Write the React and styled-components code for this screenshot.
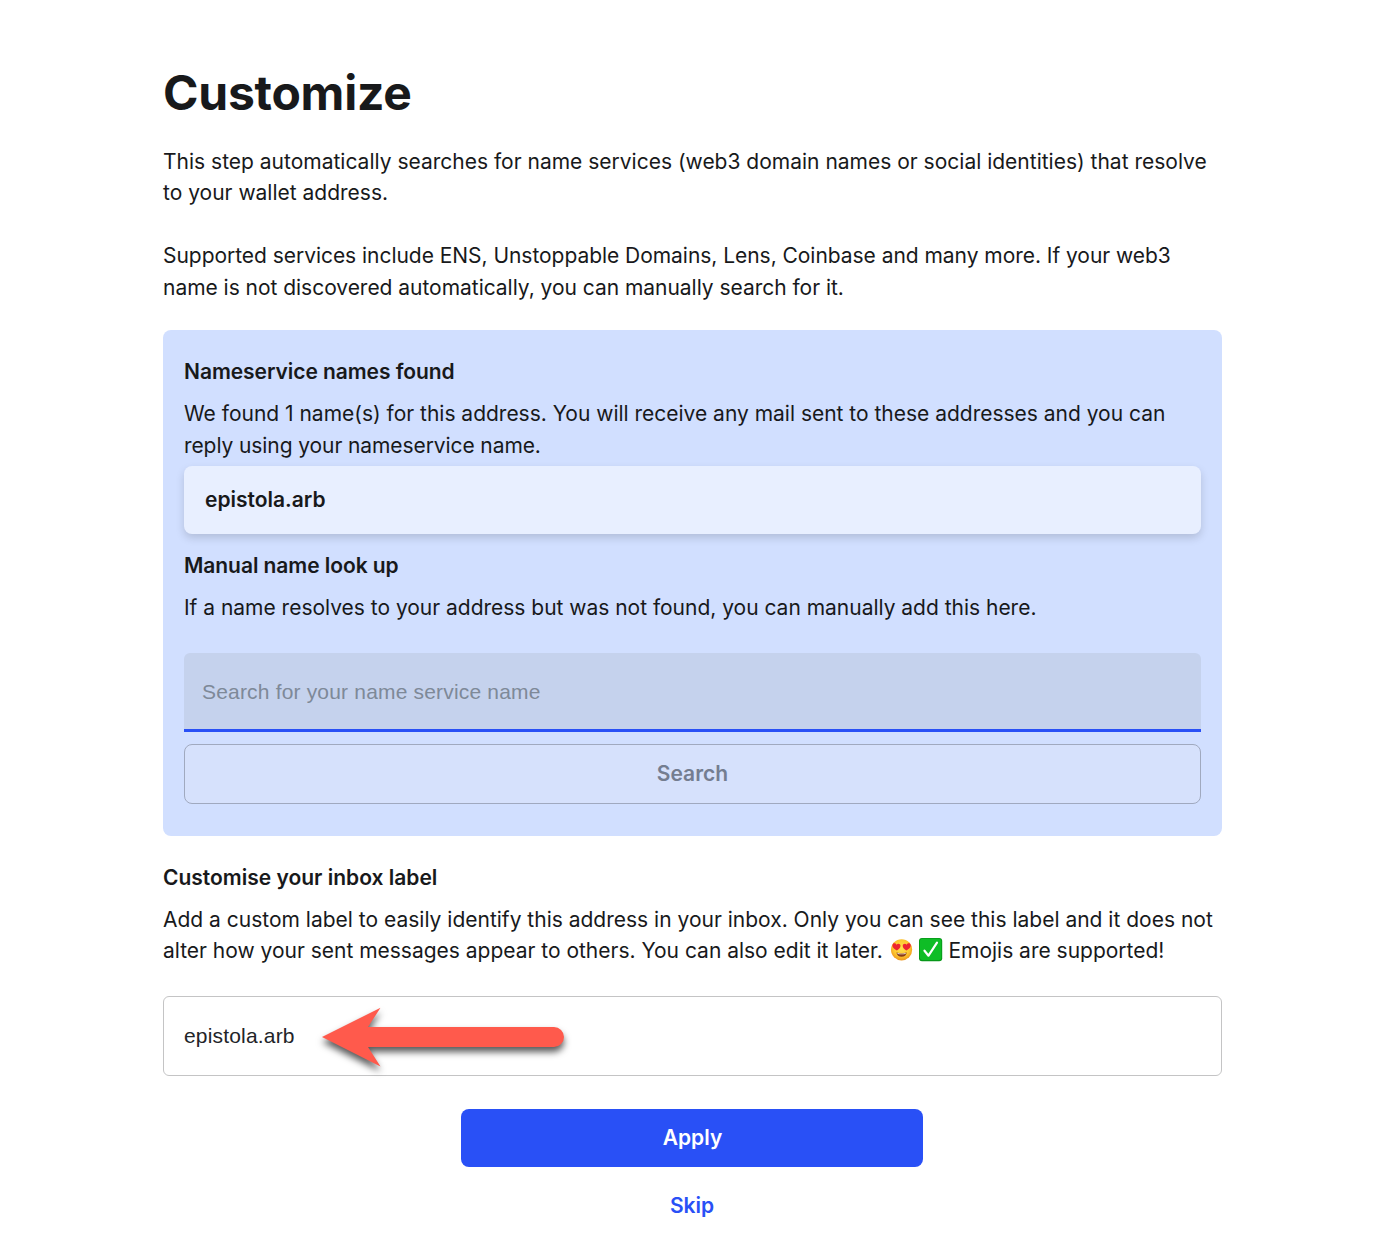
import React from 'react';
import styled, { createGlobalStyle } from 'styled-components';

const GlobalStyle = createGlobalStyle`
  *, *::before, *::after { box-sizing: border-box; }
  body {
    margin: 0;
    background: #fff;
    color: #18191b;
    font-family: Inter, "Liberation Sans", sans-serif;
    font-size: 21px;
    line-height: 31.5px;
  }
  h1, h2, p { margin: 0; }
`;

const Page = styled.main`
  width: 1059px;
  min-height: 1250px;
  margin-left: 163px;
  padding-top: 64px;
  display: flex;
  flex-direction: column;
`;

const Title = styled.h1`
  font-size: 48px;
  line-height: 58px;
  font-weight: 700;
  letter-spacing: -0.25px;
`;

const Copy = styled.p`
  margin-top: ${({ $top }) => $top || 0}px;
  white-space: nowrap;
`;

const Line = styled.span`
  display: block;
  letter-spacing: ${({ $track = 0 }) => $track}px;
`;

const Heading = styled.h2`
  margin-top: ${({ $top }) => $top || 0}px;
  font-size: 21px;
  line-height: 32px;
  font-weight: 600;
  letter-spacing: ${({ $track = 0 }) => $track}px;
`;

const Panel = styled.section`
  height: 506px;
  margin-top: 27px;
  padding: 26px 21px 32px;
  border-radius: 8px;
  background: #d1dfff;
  display: flex;
  flex-direction: column;
`;

const NameCard = styled.div`
  flex: none;
  height: 68px;
  margin-top: 5px;
  padding: 0 21px;
  display: flex;
  align-items: center;
  border-radius: 8px;
  background: #e8efff;
  font-weight: 600;
  box-shadow: 0 4px 8px rgba(0, 0, 0, 0.15);
`;

const SearchInput = styled.input`
  flex: none;
  height: 79px;
  margin-top: 29px;
  padding: 2px 18px 0;
  border: 0;
  border-bottom: 3px solid #2950f6;
  border-radius: 6px 6px 0 0;
  outline: 0;
  background: #c5d2ed;
  font: 21px "Liberation Sans", Arial, sans-serif;
  letter-spacing: 0.18px;
  &::placeholder { color: #7e8998; opacity: 1; }
`;

const SearchButton = styled.button`
  flex: none;
  height: 60px;
  margin-top: 12px;
  border: 1px solid #a0a9bf;
  border-radius: 8px;
  background: #d6e1fc;
  color: #747d90;
  font: 600 21px Inter, sans-serif;
`;

const LabelField = styled.div`
  position: relative;
  flex: none;
  height: 80px;
  margin-top: 29.25px;
  display: flex;
`;

const LabelInput = styled.input`
  flex: 1;
  padding: 0 20px;
  border: 1px solid #c4c4c5;
  border-radius: 6px;
  outline: 0;
  background: #fff;
  color: #222428;
  font: 21px "Liberation Sans", Arial, sans-serif;
  letter-spacing: 0.18px;
`;

const Pointer = styled.svg`
  position: absolute;
  left: 149px;
  top: 2px;
  overflow: visible;
  filter: drop-shadow(0 5px 3.5px rgba(0, 0, 0, 0.65));
`;

const Actions = styled.div`
  display: flex;
  flex-direction: column;
  align-items: center;
  margin-top: 33px;
  padding-right: 1px;
`;

const ApplyButton = styled.button`
  width: 462px;
  height: 58px;
  padding: 0 0 2px 1px;
  border: 0;
  border-radius: 8px;
  background: #2950f6;
  color: #fff;
  font: 600 21px Inter, sans-serif;
`;

const SkipButton = styled.button`
  height: 42px;
  margin-top: 17px;
  padding: 0;
  border: 0;
  background: none;
  color: #2950f6;
  font: 600 21px Inter, sans-serif;
`;

const Emoji = styled.svg`
  width: 24px;
  height: 24px;
  vertical-align: -4px;
`;

const HeartEyes = () => (
  <Emoji viewBox="0 0 24 24" aria-label="heart eyes">
    <defs>
      <radialGradient id="face" cx="50%" cy="42%" r="58%">
        <stop offset="0" stopColor="#ffe34d" />
        <stop offset="0.65" stopColor="#fdc82f" />
        <stop offset="1" stopColor="#ee961c" />
      </radialGradient>
    </defs>
    <circle cx="12.6" cy="11.8" r="10.6" fill="url(#face)" />
    <path d="M7.4 14.6Q12.6 16.2 17.8 14.6Q17 18.8 12.6 18.8T7.4 14.6Z" fill="#8a3c16" />
    <path d="M8.3 15.1Q12.6 16.3 16.9 15.1L16.4 15.9Q12.6 16.7 8.8 15.9Z" fill="#fff" />
    <path d="M7.9 12.6C5.3 11.1 2.9 9.1 3.5 6.8C4.2 4.8 6.6 5 7.5 6.8C8.7 5.2 11.3 5.6 11.5 7.8C11.5 9.8 9.8 11.4 7.9 12.6Z" fill="#ed2430" />
    <path d="M17.3 12.6C19.9 11.1 22.3 9.1 21.7 6.8C21 4.8 18.6 5 17.7 6.8C16.5 5.2 13.9 5.6 13.7 7.8C13.7 9.8 15.4 11.4 17.3 12.6Z" fill="#ed2430" />
  </Emoji>
);

const CheckBox = () => (
  <Emoji viewBox="0 0 24 24" aria-label="check mark">
    <rect x="0" y="0" width="23.2" height="23.2" rx="3" fill="#079719" />
    <rect x="0.9" y="0.7" width="21.4" height="21.4" rx="2.5" fill="#0fbd26" />
    <path d="M5.5 12.7L9.5 17.7L18 4.7" fill="none" stroke="#fff" strokeWidth="2.2" strokeLinecap="round" strokeLinejoin="round" />
  </Emoji>
);

export default function App() {
  return (
    <>
      <GlobalStyle />
      <Page>
        <Title>Customize</Title>
        <Copy $top={23.75}>
          <Line>This step automatically searches for name services (web3 domain names or social identities) that resolve</Line>
          <Line>to your wallet address.</Line>
        </Copy>
        <Copy $top={31.25}>
          <Line $track={-0.04}>Supported services include ENS, Unstoppable Domains, Lens, Coinbase and many more. If your web3</Line>
          <Line $track={-0.03}>name is not discovered automatically, you can manually search for it.</Line>
        </Copy>
        <Panel>
          <Heading $track={-0.06}>Nameservice names found</Heading>
          <Copy $top={10}>
            <Line $track={-0.01}>We found 1 name(s) for this address. You will receive any mail sent to these addresses and you can</Line>
            <Line $track={-0.09}>reply using your nameservice name.</Line>
          </Copy>
          <NameCard>epistola.arb</NameCard>
          <Heading $top={16} $track={-0.06}>Manual name look up</Heading>
          <Copy $top={10}>
            <Line $track={-0.015}>If a name resolves to your address but was not found, you can manually add this here.</Line>
          </Copy>
          <SearchInput placeholder="Search for your name service name" />
          <SearchButton disabled>Search</SearchButton>
        </Panel>
        <Heading $top={26}>Customise your inbox label</Heading>
        <Copy $top={9.75}>
          <Line>Add a custom label to easily identify this address in your inbox. Only you can see this label and it does not</Line>
          <Line $track={-0.01}>
            alter how your sent messages appear to others. You can also edit it later. <HeartEyes /> <CheckBox /> Emojis are supported!
          </Line>
        </Copy>
        <LabelField>
          <LabelInput defaultValue="epistola.arb" />
          <Pointer width="260" height="76" viewBox="0 0 260 76">
            <path d="M10 39L68.5 9.8L56 29H242A10 10 0 0 1 242 49H56L68.5 68.5Z" fill="#ff5a4c" />
          </Pointer>
        </LabelField>
        <Actions>
          <ApplyButton>Apply</ApplyButton>
          <SkipButton>Skip</SkipButton>
        </Actions>
      </Page>
    </>
  );
}
